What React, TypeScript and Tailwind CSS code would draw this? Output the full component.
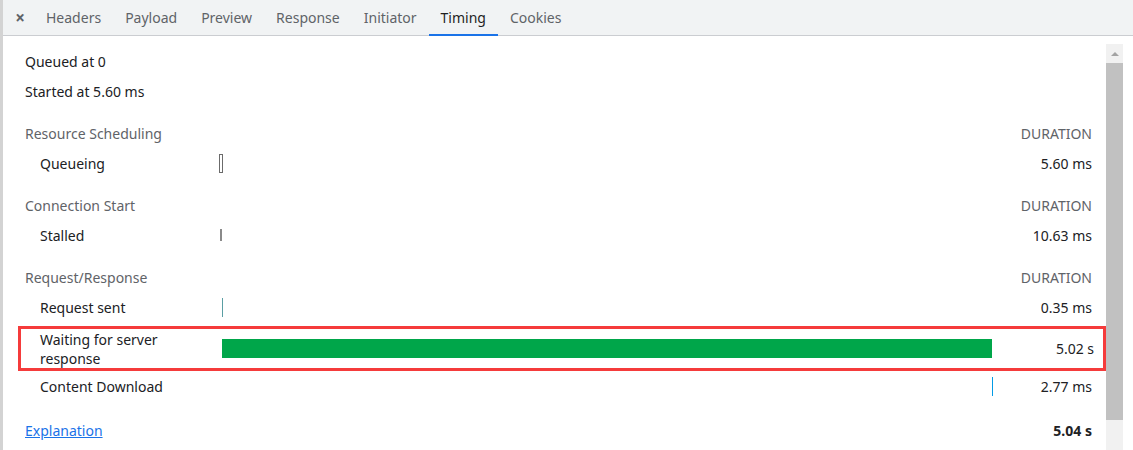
const font = { fontFamily: '"Noto Sans", "Open Sans", sans-serif' };

const tabs = ["Headers", "Payload", "Preview", "Response", "Initiator", "Timing", "Cookies"];

interface Row {
  label: string;
  value: string;
  bar: React.ReactNode;
  boxed?: boolean;
}

interface Section {
  title: string;
  rows: Row[];
}

const sections: Section[] = [
  {
    title: "Resource Scheduling",
    rows: [
      {
        label: "Queueing",
        value: "5.60 ms",
        bar: <div className="ml-[-1px] h-[19px] w-[4px] border border-[#6b6b6b] bg-white" />,
      },
    ],
  },
  {
    title: "Connection Start",
    rows: [
      {
        label: "Stalled",
        value: "10.63 ms",
        bar: <div className="h-[12px] w-[2px] bg-[#8a8a8a]" />,
      },
    ],
  },
  {
    title: "Request/Response",
    rows: [
      {
        label: "Request sent",
        value: "0.35 ms",
        bar: <div className="ml-[2px] h-[19px] w-[1px] bg-[#5a9ea3]" />,
      },
      {
        label: "Waiting for server response",
        value: "5.02 s",
        boxed: true,
        bar: <div className="ml-[2px] h-[19px] w-[770px] shrink-0 bg-[#00a64a]" />,
      },
      {
        label: "Content Download",
        value: "2.77 ms",
        bar: <div className="ml-[772px] h-[19px] w-[1px] shrink-0 bg-[#039be5]" />,
      },
    ],
  },
];

function TimingRow({ row }: { row: Row }) {
  if (row.boxed) {
    return (
      <div className="mt-[4px] ml-[-7px] mr-[-14px] flex h-[45px] items-center border-[3px] border-[#f53b3b] pl-[19px] pr-[9px]">
        <div className="w-[180px] shrink-0 text-[14px] leading-[19px] text-[#202124]">
          Waiting for server
          <br />
          response
        </div>
        <div className="flex min-w-0 flex-1 items-center">{row.bar}</div>
        <div className="w-[80px] shrink-0 text-right text-[14px] text-[#202124]">{row.value}</div>
      </div>
    );
  }
  return (
    <div className="flex h-[30px] items-center pl-[15px]">
      <div className="w-[180px] shrink-0 text-[14px] text-[#202124]">{row.label}</div>
      <div className="flex min-w-0 flex-1 items-center">{row.bar}</div>
      <div className="w-[80px] shrink-0 text-right text-[14px] text-[#202124]">{row.value}</div>
    </div>
  );
}

export default function App() {
  return (
    <div className="flex h-[450px] w-[1133px] flex-col overflow-hidden border-l-[3px] border-[#d3d3d3] bg-white" style={font}>
      {/* Tab strip */}
      <div className="flex h-[36px] shrink-0 items-stretch border-b border-[#cbcdd1] bg-[#f1f3f4] pl-[9px]">
        <div className="mr-[6px] flex w-[16px] items-center justify-center text-[17px] font-bold text-[#5f6368]">×</div>
        {tabs.map((t) => (
          <div
            key={t}
            className={
              t === "Timing"
                ? "relative flex items-center px-[12px] text-[14px] text-[#1f1f1f]"
                : "flex items-center px-[12px] text-[14px] text-[#5f6368]"
            }
          >
            {t}
            {t === "Timing" && <div className="absolute bottom-[-1px] left-0 right-0 h-[2px] bg-[#1a73e8]" />}
          </div>
        ))}
      </div>

      <div className="flex min-h-0 flex-1">
        {/* Timing content */}
        <div className="min-w-0 flex-1 pl-[22px] pr-[14px] pt-[10px]">
          <div className="flex h-[30px] items-center text-[14px] text-[#202124]">Queued at 0</div>
          <div className="flex h-[30px] items-center text-[14px] text-[#202124]">Started at 5.60 ms</div>

          {sections.map((s) => (
            <div key={s.title} className="mt-[12px]">
              <div className="flex h-[30px] items-center justify-between text-[14px] text-[#5f6368]">
                <span>{s.title}</span>
                <span>DURATION</span>
              </div>
              {s.rows.map((r) => (
                <TimingRow key={r.label} row={r} />
              ))}
            </div>
          ))}

          <div className="mt-[14px] flex h-[30px] items-center justify-between text-[14px]">
            <span className="text-[#1a73e8] underline">Explanation</span>
            <span className="font-bold text-[#202124]">5.04 s</span>
          </div>
        </div>

        {/* Scrollbar */}
        <div className="mr-[10px] mt-[8px] flex w-[17px] shrink-0 flex-col bg-[#f1f1f1]">
          <div className="flex h-[19px] items-center justify-center">
            <div className="h-0 w-0 border-x-[4px] border-b-[4px] border-x-transparent border-b-[#a3a3a3]" />
          </div>
          <div className="h-[357px] bg-[#c1c1c1]" />
        </div>
      </div>
    </div>
  );
}
